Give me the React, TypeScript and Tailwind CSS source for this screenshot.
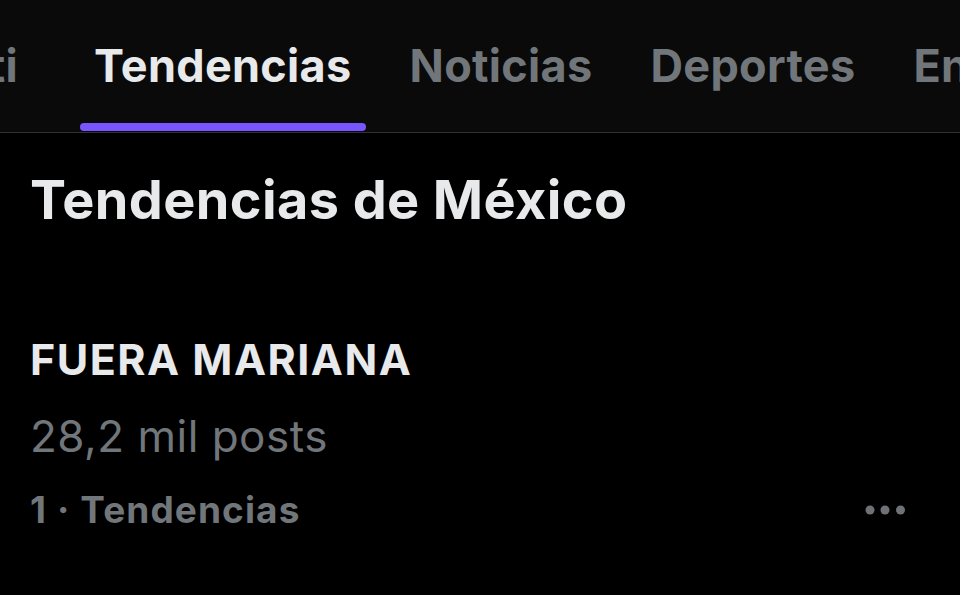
const tabs = ['Tendencias', 'Noticias', 'Deportes', 'Entretenimiento'];

export default function App() {
    return (
        <div className="w-[960px] h-[595px] overflow-hidden bg-black font-['Inter','Noto_Sans',sans-serif] text-[#e7e9ea]">
            {/* Tab bar, scrolled a little so the first tab is cut off */}
            <div className="h-[133px] bg-[#0a0a0a] border-b border-[#2f3336] overflow-hidden">
                <div className="flex h-full whitespace-nowrap">
                    <div className="w-[65px] shrink-0 flex justify-end overflow-hidden">
                        <span className="pt-[38px] pr-[47px] text-[45px] leading-[56px] font-bold tracking-[0.3px] text-[#71767b]">
                            Para ti
                        </span>
                    </div>
                    {tabs.map((tab) => {
                        const active = tab === 'Tendencias';
                        return (
                            <div key={tab} className="h-full px-[15px] shrink-0">
                                <div className="relative h-full px-[14px]">
                                    <span
                                        className={`block pt-[38px] text-[45px] leading-[56px] font-bold tracking-[0.3px] ${
                                            active ? 'text-[#e7e9ea]' : 'text-[#71767b]'
                                        }`}
                                    >
                                        {tab}
                                    </span>
                                    {active && (
                                        <div className="absolute bottom-[1px] left-0 right-0 h-[8px] rounded-full bg-[#7856ff]" />
                                    )}
                                </div>
                            </div>
                        );
                    })}
                </div>
            </div>

            {/* Section heading */}
            <h2 className="px-[30px] pt-[35px] text-[54px] leading-[64px] font-bold tracking-[0.4px]">
                Tendencias de México
            </h2>

            {/* Trend item */}
            <div className="px-[30px] pt-[101px]">
                <div className="text-[43px] leading-[52px] font-bold tracking-[1.5px]">FUERA MARIANA</div>
                <div className="text-[44px] leading-[56px] text-[#71767b] tracking-[0.5px] mt-[23px]">
                    28,2 mil posts
                </div>
                <div className="flex items-center justify-between mt-[22px]">
                    <span className="text-[37px] leading-[48px] font-bold text-[#71767b] tracking-[1.1px]">
                        1 · Tendencias
                    </span>
                    <svg width="44" height="12" viewBox="0 0 44 12" className="mr-[22px] text-[#6e7175]" fill="currentColor">
                        <circle cx="6" cy="6" r="4.5" />
                        <circle cx="21" cy="6" r="4.5" />
                        <circle cx="36.5" cy="6" r="4.5" />
                    </svg>
                </div>
            </div>
        </div>
    );
}
